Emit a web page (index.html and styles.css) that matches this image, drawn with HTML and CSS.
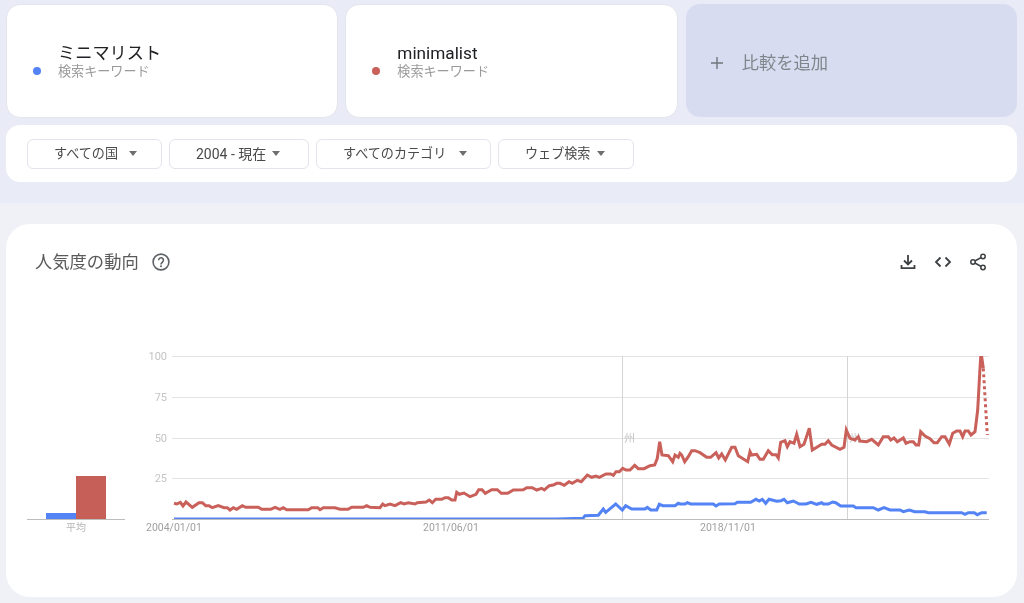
FILE: index.html
```html
<!DOCTYPE html>
<html lang="ja">
<head>
<meta charset="utf-8">
<title>Google Trends</title>
<link rel="stylesheet" href="styles.css">
</head>
<body>
<header class="top">
  <div class="terms">
    <div class="term">
      <span class="dot dot-blue"></span>
      <div class="term-text">
        <div class="term-name">ミニマリスト</div>
        <div class="term-sub">検索キーワード</div>
      </div>
    </div>
    <div class="term">
      <span class="dot dot-red"></span>
      <div class="term-text">
        <div class="term-name">minimalist</div>
        <div class="term-sub">検索キーワード</div>
      </div>
    </div>
    <div class="term term-add">
      <svg class="plus" width="14" height="14" viewBox="0 0 14 14"><path d="M7 1v12M1 7h12" stroke="#70757a" stroke-width="1.4" fill="none"/></svg>
      <span class="add-label">比較を追加</span>
    </div>
  </div>
  <div class="filters">
    <div class="chip chip-geo"><span>すべての国</span><i class="caret"></i></div>
    <div class="chip chip-time"><span>2004 - 現在</span><i class="caret"></i></div>
    <div class="chip chip-cat"><span>すべてのカテゴリ</span><i class="caret"></i></div>
    <div class="chip chip-type"><span>ウェブ検索</span><i class="caret"></i></div>
  </div>
</header>
<main class="content">
  <section class="panel">
    <div class="panel-head">
      <div class="panel-title">
        <h2>人気度の動向</h2>
        <svg class="help" width="20" height="20" viewBox="0 0 20 20">
          <circle cx="10" cy="10" r="7.9" fill="none" stroke="#5f6368" stroke-width="1.6"/>
          <path d="M7.600 8.200a2.400 2.400 0 1 1 3.900 1.900c-.9.7-1.500 1-1.500 2.300" fill="none" stroke="#5f6368" stroke-width="1.600"/>
          <circle cx="10" cy="14.300" r="1" fill="#5f6368"/>
        </svg>
      </div>
      <div class="panel-actions">
        <svg width="18" height="18" viewBox="0 0 18 18"><path d="M9 2v9M5 7.500l4 4 4-4M2.500 12v3.200h13V12" fill="none" stroke="#3c4043" stroke-width="1.800"/></svg>
        <svg width="18" height="18" viewBox="0 0 18 18"><path d="M6.500 4.500L2 9l4.500 4.500M11.500 4.500L16 9l-4.500 4.500" fill="none" stroke="#3c4043" stroke-width="1.800"/></svg>
        <svg width="18" height="18" viewBox="0 0 18 18"><path d="M14 3.500L4 9l10 5.500" fill="none" stroke="#3c4043" stroke-width="1.500"/><circle cx="14" cy="3.500" r="2.200" fill="#fff" stroke="#3c4043" stroke-width="1.500"/><circle cx="4" cy="9" r="2.200" fill="#fff" stroke="#3c4043" stroke-width="1.500"/><circle cx="14" cy="14.500" r="2.200" fill="#fff" stroke="#3c4043" stroke-width="1.500"/></svg>
      </div>
    </div>
    <svg class="chart" width="1011" height="200" viewBox="6 340 1011 200">
      <defs>
        <clipPath id="plot"><rect x="172" y="356" width="817" height="163"/></clipPath>
      </defs>
      <g class="grid">
        <path d="M172 356.500H989M172 397.500H989M172 438.500H989M172 478.500H989"/>
        <path d="M622.500 356V519M847.500 356V519"/>
      </g>
      <rect x="46" y="513" width="30" height="6" fill="#5383f5"/>
      <rect x="76" y="476" width="30" height="43" fill="#c65f57"/>
      <text class="tick tick-mean" x="76" y="531" text-anchor="middle">平均</text>
      <text class="tick tick-y" x="167" y="360" text-anchor="end">100</text>
      <text class="tick tick-y" x="167" y="401" text-anchor="end">75</text>
      <text class="tick tick-y" x="167" y="442" text-anchor="end">50</text>
      <text class="tick tick-y" x="167" y="482" text-anchor="end">25</text>
      <text class="tick tick-x" x="146" y="531">2004/01/01</text>
      <text class="tick tick-x" x="423" y="531">2011/06/01</text>
      <text class="tick tick-x" x="700" y="531">2018/11/01</text>
      <text class="tick tick-note" x="624" y="442">州</text>
      <text class="tick tick-note" x="849" y="442">州</text>
      <g clip-path="url(#plot)">
      <polyline class="line line-blue" points="174,519 556.700,519 583,518.300 585,515.700 598.300,515.300 603.300,509 605.700,512.300 615.700,504 622.300,510 625.700,505.700 631.700,509 645,509 647.300,507.300 650.700,510 656.700,510 659.300,504.300 662.700,505.700 675,505.700 678.300,503.300 680,504 685,504 687.300,502.700 690.700,504 713.300,504 716,506 719.300,504 735,503.700 737.300,502.300 750.700,502.300 756,499.300 759.300,501 762.300,499.300 765.700,503.300 769,499.300 776.700,501.300 781,500.700 784,499.300 787.300,502.700 793.300,501 799.300,504 806,504 811,502.300 816.700,504.300 821.700,502.700 823.300,504 828.300,504 832.700,502 835.700,502.700 840.700,506 853.300,506 856,507.700 873.300,507.700 878.300,510 884,507.700 890,510 900,510 903.300,511.700 909.300,510 914.700,511.700 925,511.700 928.300,512.700 961.700,512.700 965,514.300 968.300,512.700 974.300,512.700 977.300,514.700 981.700,512.700 986.700,512.700"/>
      <polyline class="line line-red" points="174,503.300 176.700,504 180.300,502.300 183,506 186,502 192.300,507.300 199,502.700 202.300,502.700 205.700,505.700 209,505.700 212.300,507.700 218.300,505.700 224,507.700 227.300,507.700 230,510 233.300,507.700 236.700,509.300 242.300,505.700 245.700,507.300 258.300,507.300 261.700,509.300 270.700,509.300 275,507.300 280,509.300 283.300,507.700 286.700,509.700 308.300,509.700 311.700,507.700 317.700,507.700 320,509.700 323.300,507.700 335,507.700 340,509.300 348,509.300 351.700,507.300 363.300,507.300 366.700,505.700 370,507.300 380,507.700 382.700,504 385,505.700 390,504 395,505.700 400.700,502.700 404,504 408.300,502.700 415,504 417.300,502.700 426,502 429.300,500 432.300,502.700 435.700,499.300 441.700,499.300 445,497.700 448.300,497.700 451.700,500 455,500 456.700,492.300 459.300,494.300 464,493 470,496.700 476,494.300 478.700,489.700 482,489.700 485.300,493.300 491.700,489.700 497.300,489.700 501.300,493.300 507.700,493.300 513.300,490 523.300,489.700 526.700,487.700 532.300,487.700 536.700,490 541.700,488.300 544.300,490 549.300,485.700 553.300,485 556.700,483.300 560,483.300 564.300,485.300 569,481.700 572.300,483.300 577.300,480.300 581.300,481.700 587.300,475 591.700,477.300 596,476 599.300,477.300 606,474 610.700,474 613.300,475.300 616,471.700 619.300,471.700 622.700,468.300 626,470 630,470 634.700,465.300 638.300,468.700 644,468.700 650,465.700 654.700,465 657.300,458.300 659.700,441.700 662,455 668.300,455.700 672.700,461.700 675,455 678.300,457.300 680,453.300 681.700,455 684.700,461.700 688.300,456.700 691.700,450.700 695,450.700 700,452.700 706.700,457.300 710.700,457.300 716,452.700 718.700,458 721.700,454 725.300,460 731.700,447.300 735,447.300 738.300,455.700 747.700,461.700 750,451.700 751.700,455 756.700,454.300 760,459.300 763.300,459.300 768.300,450.700 772.300,454.700 776,454.700 778.300,458 780.700,442.300 785,440.700 787.300,446.700 790,441.700 794,443.300 796.700,434.300 800,446.700 804,444.300 809.300,428.300 812.300,450 821.700,444.300 825,444.300 828.300,440.700 831.700,445 840,449.300 844,447.300 846.300,430 850,438.300 855,440 858.300,436.700 860,441 866.700,441.700 871.700,439.300 878.300,445 883.300,436.700 888.300,436.700 890.700,440 894,438 897.300,441.700 903.300,438 906,443.300 910,441.700 913.300,441.700 916,445 918.700,445 920.700,431.700 925,436 930,438.700 934,442.700 937.300,442.700 941.700,436.700 945,436.700 949.300,444 952.700,433.300 956.700,431 960,431 962.700,436.700 965,431 968.300,431 971,435 975,431.700 977.700,410 979.700,373.300 981,352 983.300,368.300"/>
      <polyline class="line line-red line-dotted" points="983.300,368.300 987.300,435"/>
      </g>
      <path class="axis" d="M27 519.500H125M172 519.500H989"/>
    </svg>
  </section>
</main>
</body>
</html>
```
FILE: styles.css
```css
* { box-sizing: border-box; }
html, body { margin: 0; height: 603px; overflow: hidden; }
html { background: #e9ecf6; }
body {
  background: #e9ecf6;
  font-family: Roboto, "Noto Sans CJK JP", sans-serif;
  color: #202124;
  filter: blur(0.45px);
}
.top { padding: 4px 7px 0 6px; }
.terms {
  display: grid;
  grid-template-columns: repeat(3, 1fr);
  gap: 7px;
  height: 114px;
}
.term {
  display: flex;
  align-items: center;
  background: #fff;
  border: 1px solid #e3e4ec;
  border-radius: 14px;
  padding: 1px 0 0 26px;
}
.term-add {
  background: #d8dcf0;
  border: 0;
  border-radius: 14px;
  height: 113px;
  margin-left: 1px;
  padding: 4px 0 0 24px;
}
.dot {
  width: 8px;
  height: 8px;
  border-radius: 50%;
  margin: 18px 17px 0 0;
  flex: none;
}
.dot-blue { background: #5383f5; }
.dot-red { background: #c9605a; }
.term-name { font-size: 17.200px; line-height: 20px; color: #202124; }
.term-sub { font-size: 13.100px; line-height: 17px; color: #9a9a9a; margin-top: 0; }
.plus { margin-right: 18px; flex: none; }
.add-label { font-size: 17.300px; line-height: 22px; color: #80868b; }
.filters {
  display: flex;
  gap: 7px;
  height: 57px;
  margin-top: 7px;
  padding: 14px 21px;
  background: #fff;
  border-radius: 14px;
}
.chip {
  display: flex;
  align-items: center;
  height: 30px;
  padding: 0 0 3px 26px;
  background: #fff;
  border: 1px solid #e3e4ec;
  border-radius: 6px;
  font-size: 13.100px;
  color: #4a4a4a;
}
.caret {
  width: 0;
  height: 0;
  border-left: 4.500px solid transparent;
  border-right: 4.500px solid transparent;
  border-top: 5px solid #6f6f6f;
  margin-top: 1px;
}
.chip-geo { width: 135px; }
.chip-geo .caret { margin-left: 11px; }
.chip-time { width: 140px; font-size: 14px; }
.chip-time .caret { margin-left: 6px; }
.chip-cat { width: 175px; }
.chip-cat .caret { margin-left: 13px; }
.chip-type { width: 136px; }
.chip-type .caret { margin-left: 7px; }
.content {
  margin-top: 21px;
  height: 400px;
  padding: 21px 7px 0 6px;
  background: #eff1f7;
}
.panel {
  height: 373px;
  background: #fff;
  border-radius: 24px;
}
.panel-head {
  display: flex;
  justify-content: space-between;
  align-items: flex-start;
  height: 116px;
  padding: 26px 30px 0 29px;
}
.panel-title { display: flex; align-items: center; gap: 12px; }
.panel-title h2 {
  margin: 0;
  font-size: 17.300px;
  font-weight: 400;
  line-height: 24px;
  color: #5a5a5a;
}
.help { display: block; }
.panel-actions { display: flex; gap: 17px; padding-top: 3px; }
.panel-actions svg { display: block; }
.chart { display: block; }
.grid path { stroke: #e4e4e4; stroke-width: 1; fill: none; }
.grid path + path { stroke: #d4d4d4; }
.axis { stroke: #bdbdbd; stroke-width: 1; fill: none; }
.tick { font-family: Roboto, "Noto Sans CJK JP", sans-serif; }
.tick-y { font-size: 11px; fill: #c4c4c4; }
.tick-x { font-size: 10.500px; fill: #a0a0a0; }
.tick-mean { font-size: 10px; fill: #b5b5b5; }
.tick-note { font-size: 11px; fill: #c4c4c4; }
.line { fill: none; stroke-width: 3; stroke-linejoin: miter; }
.line-blue { stroke: #5383f5; }
.line-red { stroke: #c9605a; }
.line-dotted { stroke-width: 3; stroke-dasharray: 3 3; }
```
